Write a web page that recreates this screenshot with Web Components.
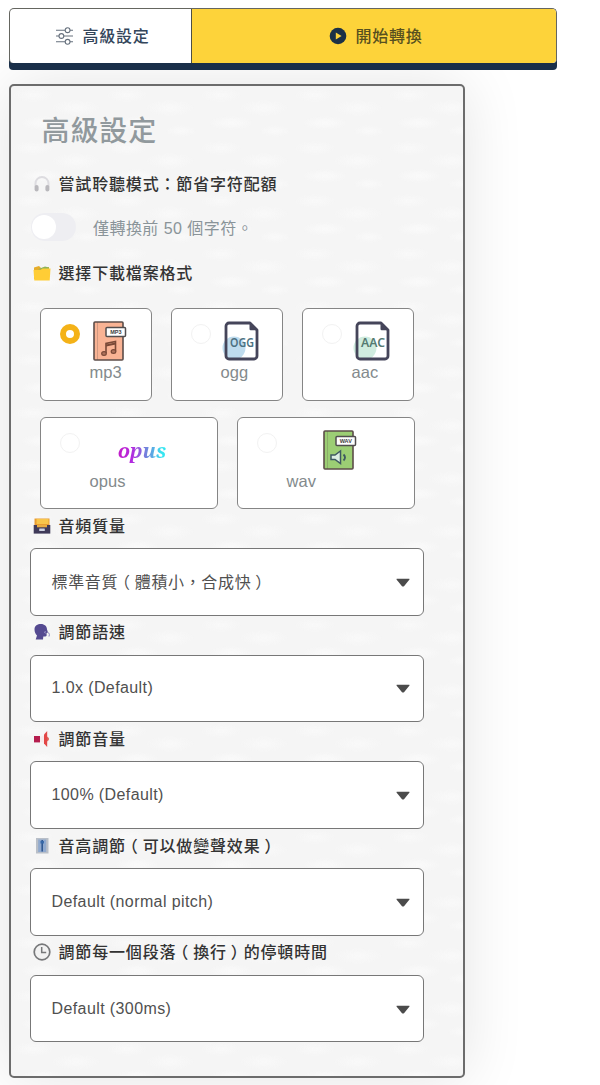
<!DOCTYPE html>
<html lang="zh-Hant">
<head>
<meta charset="utf-8">
<title>高級設定</title>
<style>
html,body{margin:0;height:100%;overflow:hidden}
body{background:#fff;font-family:"Liberation Sans","Noto Sans CJK TC",sans-serif;font-size:16px;color:#444}
</style>
</head>
<body>
<settings-page></settings-page>
<script>
const define = (name, html, setup) => customElements.define(name, class extends HTMLElement {
  constructor() {
    super();
    const t = document.createElement('template');
    t.innerHTML = html;
    this.attachShadow({mode: 'open'}).appendChild(t.content.cloneNode(true));
  }
  connectedCallback() { if (setup) setup(this, this.shadowRoot); }
});

const ICONS = {
  sliders: '<g fill="none" stroke="#66707d" stroke-width="1.1"><path d="M0 3.2h9M14 3.2h3M0 9h3M8 9h9M0 14.8h9M14 14.8h3"/><circle cx="11.6" cy="3.2" r="2.4"/><circle cx="5.4" cy="9" r="2.4"/><circle cx="11.6" cy="14.8" r="2.4"/></g>',
  play: '<circle cx="9" cy="9" r="8.3" fill="#1c3146"/><path d="M6.8 5.4v7.2L12.6 9z" fill="#fdd33a"/>',
  headphones: '<path d="M2.5 12V8.500a6.500 6.500 0 0 1 13 0V12" fill="none" stroke="#dddce0" stroke-width="2"/><rect x="1.600" y="10" width="4" height="6.600" rx="2" fill="#b9b8bc"/><rect x="12.400" y="10" width="4" height="6.600" rx="2" fill="#b9b8bc"/>',
  folder: '<path d="M1 3.500L6 2l2 2 8-1v12H1z" fill="#e6ad2a"/><path d="M5 5.200l7-2.600 4 .8v3z" fill="#8db35c"/><path d="M.5 6h7l2-1.600h8L16.700 16.500H1.300z" fill="#ffcd35"/>',
  box: '<path d="M1.500 1.500h15v8h-15z" fill="#e89c32"/><path d="M3.500 2h12v5h-12z" fill="#f8c54b"/><path d="M.7 8h16.600v8.600H.7z" fill="#3f3a59"/><path d="M4 8h10v2.300H4z" fill="#e9ad42"/><rect x="6.200" y="11.500" width="5.600" height="2.500" rx=".5" fill="#ced2e0"/>',
  voice: '<path d="M1.500 6.300C1.500 2.800 4.500 1 8 1s6 2.300 6 5.400l1 3-1.400.7v2.400c0 1-1.600 1.300-3.300 1L10 16.500H2.700L4 12.400C2.400 11 1.500 9 1.500 6.300z" fill="#554a91"/><path d="M13 8.500l-2 .8 2 1" fill="none" stroke="#8d84bc"/><path d="M15.500 9.500q1.500 2 .5 4" fill="none" stroke="#8d84bc"/>',
  horn: '<rect x="1" y="6" width="6" height="6.400" fill="#b51d4e"/><path d="M7 7l4-1.500v7.500l-4-1.500z" fill="#f7e9ea"/><path d="M11 4.500L14.200 1v16L11 13.500z" fill="#e34646"/><path d="M14.200 6.500q3.400 2.500 0 5z" fill="#d9493c"/>',
  level: '<rect x="3" y="1" width="12.500" height="15.500" fill="#b9bfc8"/><rect x="5.200" y="2.500" width="8" height="12.500" fill="#90a9ce"/><path d="M9.200 3v11.500" stroke="#315991" stroke-width="1.600"/><rect x="7.500" y="4" width="3.400" height="2.500" fill="#3768a8"/>',
  clock: '<circle cx="9" cy="9" r="7.800" fill="#f2f2f2" stroke="#77787a" stroke-width="1.700"/><path d="M8.700 4v5.400h4.500" fill="none" stroke="#77787a" stroke-width="1.500"/>'
};

define('ui-icon', `<style>:host{display:block;width:18px;height:18px;flex:none}svg{display:block;width:100%;height:100%}</style><svg viewBox="0 0 18 18"></svg>`,
  (el, r) => { r.querySelector('svg').innerHTML = ICONS[el.getAttribute('name')] || ''; });

define('action-bar', `<style>
:host{display:flex;width:546px;height:54px;border:1px solid #656660;border-bottom:0;border-radius:5px 5px 4px 4px;box-shadow:0 7px 0 #1a2f49;background:#fff;position:relative}
</style><slot></slot>`);

define('bar-button', `<style>
:host{display:flex;align-items:center;justify-content:center;gap:9px;font-weight:500;font-family:"Noto Sans CJK TC",sans-serif;font-size:16px;letter-spacing:.7px;color:#34465b;width:181px;box-sizing:border-box;padding-left:5px;border-radius:4px}
:host([primary]){width:365px;background:#fdd33a;border-left:1px solid #4c4e45;border-radius:0 4px 4px 0;color:#57501f;padding-left:4px}
span{line-height:24px;padding-bottom:3px}
</style><ui-icon></ui-icon><span><slot></slot></span>`,
  (el, r) => { const i = r.querySelector('ui-icon'); i.setAttribute('name', el.getAttribute('icon')); i.connectedCallback && i.connectedCallback(); });

define('field-label', `<style>
:host{display:flex;align-items:center;height:33px;gap:8px;padding-left:22px;color:#333;font:500 16px/24px "Noto Sans CJK TC",sans-serif;letter-spacing:.83px;white-space:nowrap}
span{padding-bottom:2px}
</style><ui-icon></ui-icon><span><slot></slot></span>`,
  (el, r) => { const i = r.querySelector('ui-icon'); i.setAttribute('name', el.getAttribute('icon')); i.connectedCallback && i.connectedCallback(); });

define('toggle-row', `<style>
:host{display:flex;align-items:center;height:30px;gap:17px;padding-left:20.500px;color:#8a9499;letter-spacing:.45px}
.track{width:45px;height:28px;border-radius:14px;background:#eeeef2;display:flex;align-items:center;box-sizing:border-box;padding-left:1px}
.knob{width:24px;height:24px;border-radius:50%;background:#fff}
</style><div class="track"><div class="knob"></div></div><span><slot></slot></span>`);

define('format-card', `<style>
:host{display:grid;grid-template-columns:20px 1fr;column-gap:10px;box-sizing:border-box;border:1px solid #858585;border-radius:6px;background:#fff;padding:10px 20px 0 19px;width:112px;height:93px}
:host([wide]){width:178px;height:92px}
.radio{width:20px;height:20px;box-sizing:border-box;border:1px solid #f2f2f2;border-radius:50%;background:#fff;margin-top:5px}
:host([checked]) .radio{border:6px solid #f4b218}
.art{height:43px;display:flex;justify-content:center;align-items:center}
.name{color:#838a8c;font-size:16.500px;line-height:21px;letter-spacing:.1px}
</style><div class="radio"></div><div><div class="art"><slot name="art"></slot></div><div class="name"><slot></slot></div></div>`);

define('book-art', `<style>:host{display:block;width:34px;height:40px}svg{display:block}text{font:bold 5.500px "Liberation Sans",sans-serif}</style>
<svg width="34" height="40" viewBox="0 0 34 40"><rect class="cover" x="1" y="1" width="29" height="38" rx="1" stroke="#5c4d49" stroke-width="1.600"/><path d="M4.500 1v38" stroke="#5c4d49" stroke-opacity=".25"/><rect x="13" y="6.500" width="19.500" height="9" rx="1" fill="#fff" stroke="#514d4e" stroke-width="1.500"/><text x="22.800" y="13" text-anchor="middle" fill="#403c3d"></text><g class="glyph"></g></svg>`,
  (el, r) => {
    const wav = el.getAttribute('kind') === 'wav';
    r.querySelector('.cover').setAttribute('fill', wav ? '#9cce74' : '#f9b394');
    r.querySelector('text').textContent = wav ? 'WAV' : 'MP3';
    r.querySelector('.glyph').innerHTML = wav
      ? '<path d="M8 25h4l5.500-4v12.500L12 29.500H8z" fill="#dceee2" stroke="#3f5961" stroke-width="1.500"/><path d="M20.500 24.500q3 3 0 6" fill="none" stroke="#3f5961" stroke-width="1.800"/>'
      : '<path d="M13 32V22.500l9.500-2v10" fill="none" stroke="#7a4937" stroke-width="1.600"/><path d="M13 24.500l9.500-2" stroke="#7a4937" stroke-width="2"/><ellipse cx="11" cy="32.500" rx="2.300" ry="1.900" fill="#b0735c" stroke="#7a4937" stroke-width="1.200"/><ellipse cx="20.500" cy="30.500" rx="2.300" ry="1.900" fill="#b0735c" stroke="#7a4937" stroke-width="1.200"/>';
  });

define('file-art', `<style>:host{display:block;width:40px;height:40px}svg{display:block}text{font:600 12px "Noto Sans",sans-serif}</style>
<svg width="40" height="40" viewBox="0 0 40 40"><circle cx="13" cy="27" r="11.500"/><path d="M8 2h21l7 7v26a3 3 0 0 1-3 3H8a3 3 0 0 1-3-3V5a3 3 0 0 1 3-3z" fill="none" stroke="#45455a" stroke-width="2.800" stroke-linejoin="round"/><path d="M28.500 3v5a1.200 1.200 0 0 0 1.200 1.200H36z" fill="#45455a"/><text x="21" y="25.500" text-anchor="middle" textLength="24" lengthAdjust="spacingAndGlyphs"></text></svg>`,
  (el, r) => {
    const ogg = el.getAttribute('kind') === 'ogg';
    r.querySelector('circle').setAttribute('fill', ogg ? '#bfdcee' : '#d0ecdf');
    const t = r.querySelector('text');
    t.textContent = ogg ? 'OGG' : 'AAC';
    t.setAttribute('fill', ogg ? '#4c7182' : '#557a72');
  });

define('opus-art', `<style>:host{display:block;font:italic bold 20px/28px "Noto Serif","Liberation Serif",serif;margin-top:3px}
span{display:inline-block;padding-right:2px;background:linear-gradient(90deg,#c21bc9,#b32be0 28%,#6f87dc 58%,#36e6f1 88%);-webkit-background-clip:text;background-clip:text;color:transparent}</style><span><slot></slot></span>`);

define('select-box', `<style>
:host{display:flex;align-items:center;justify-content:space-between;box-sizing:border-box;width:394.500px;height:67.500px;margin:6px 0 0 19px;padding:0 13px 0 21px;border:1px solid #777;border-radius:6px;background:#fff;color:#505050;letter-spacing:.4px;line-height:24px;white-space:nowrap}
:host([cjk]){font-family:"Noto Sans CJK TC",sans-serif;letter-spacing:.65px}
:host([cjk]) span{padding-bottom:2px}
svg{display:block;margin-top:1px;flex:none}
</style><span><slot></slot></span><svg width="14" height="9" viewBox="0 0 14 9"><path d="M.7.7h12.600q.5.500 0 1L8 8.200q-1 .8-2 0L.7 1.700q-.5-.5 0-1z" fill="#4b4b4b"/></svg>`);

define('settings-panel', `<style>
:host{display:block;box-sizing:border-box;width:456.500px;height:994px;margin-top:21px;border:2px solid #6c6c6c;border-radius:5px;box-shadow:0 0 62px rgba(0,0,0,.11);
background:
 radial-gradient(ellipse 20px 7px at 22px 9px,#f9f9f9,rgba(249,249,249,0)),
 radial-gradient(ellipse 24px 8px at 65px 22px,#f9f9f9,rgba(249,249,249,0)),
 radial-gradient(ellipse 22px 7px at 32px 37px,#fafafa,rgba(250,250,250,0)),
 radial-gradient(ellipse 15px 6px at 76px 45px,#f9f9f9,rgba(249,249,249,0)),
 #f5f5f5;background-size:94px 53px}
h1{margin:0;padding:23px 0 15px 31px;font:500 28px/40px "Noto Sans CJK TC",sans-serif;letter-spacing:.9px;color:#91999d}
</style><h1><slot name="title"></slot></h1><slot></slot>`);

define('settings-page', `<style>
:host{display:block;padding:8px 0 0 8.500px}
.cards{display:grid;gap:16px;padding:19px 0 0 29px}
.row{display:flex;gap:19px}
toggle-row{margin:12px 0 14px}
.fields{display:grid;grid-auto-rows:106.700px}
i{font-style:normal;font-feature-settings:"halt";margin:0 4px}
</style>
<action-bar><bar-button icon="sliders">高級設定</bar-button><bar-button primary icon="play">開始轉換</bar-button></action-bar>
<settings-panel><span slot="title">高級設定</span>
<field-label icon="headphones" style="margin-top:3px">嘗試聆聽模式：節省字符配額</field-label>
<toggle-row>僅轉換前 50 個字符。</toggle-row>
<field-label icon="folder">選擇下載檔案格式</field-label>
<div class="cards">
<div class="row"><format-card checked>mp3<book-art slot="art" kind="mp3"></book-art></format-card><format-card>ogg<file-art slot="art" kind="ogg"></file-art></format-card><format-card>aac<file-art slot="art" kind="aac"></file-art></format-card></div>
<div class="row"><format-card wide>opus<opus-art slot="art">opus</opus-art></format-card><format-card wide>wav<book-art slot="art" kind="wav"></book-art></format-card></div>
</div>
<div class="fields">
<div><field-label icon="box">音頻質量</field-label><select-box cjk>標準音質<i>（</i>體積小，合成快<i>）</i></select-box></div>
<div><field-label icon="voice">調節語速</field-label><select-box>1.0x (Default)</select-box></div>
<div><field-label icon="horn">調節音量</field-label><select-box>100% (Default)</select-box></div>
<div><field-label icon="level">音高調節<i>（</i>可以做變聲效果<i>）</i></field-label><select-box>Default (normal pitch)</select-box></div>
<div><field-label icon="clock">調節每一個段落<i>（</i>換行<i>）</i>的停頓時間</field-label><select-box>Default (300ms)</select-box></div>
</div>
</settings-panel>`);
</script>
</body>
</html>
